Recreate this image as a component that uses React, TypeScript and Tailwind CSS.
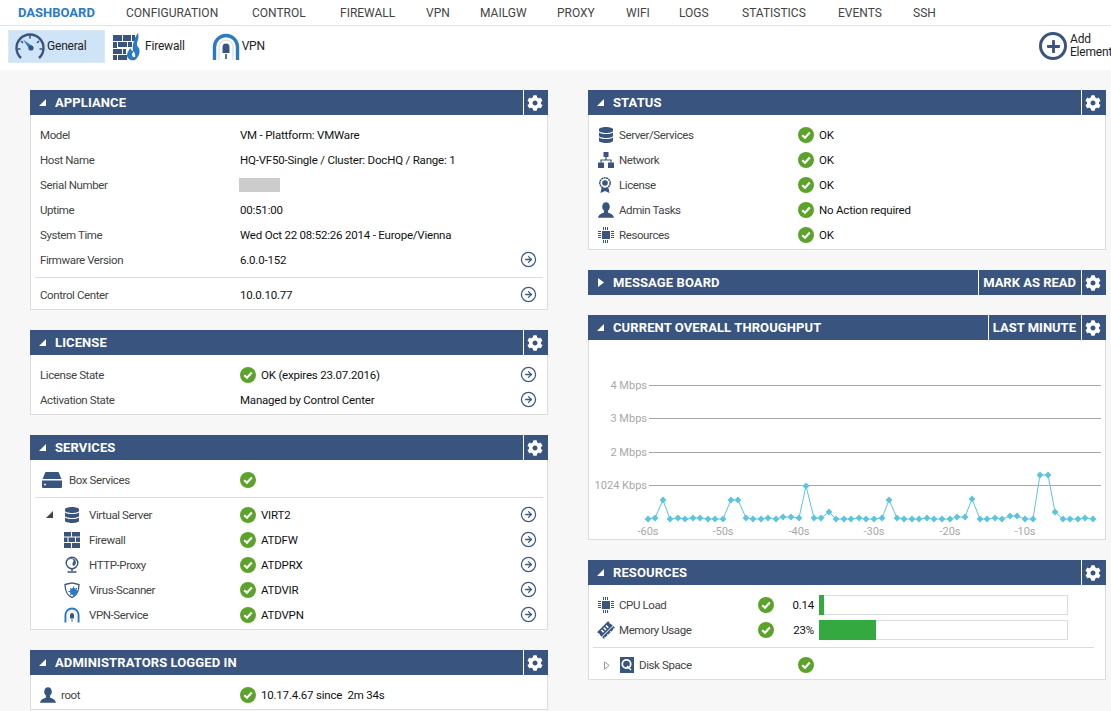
import React from "react";
import { FaCog, FaDatabase, FaMemory, FaPlus } from "react-icons/fa";
import { CircleArrowRight } from "lucide-react";

const NAVY = "#38547f";

const Check = () => (
  <svg width="16" height="16" viewBox="0 0 16 16" className="shrink-0">
    <circle cx="8" cy="8" r="8" fill="#5ba32b" />
    <path d="M4.2 8.2 7 10.8 11.8 5.6" fill="none" stroke="#fff" strokeWidth="2.2" />
  </svg>
);

const Arrow = () => <CircleArrowRight size={17} strokeWidth={1.8} color="#3f5a82" className="shrink-0" />;

const Gauge = () => (
  <svg width="30" height="28" viewBox="0 0 30 28">
    <path d="M6 26A13.5 13.5 0 1 1 24 26" fill="none" stroke="#38547f" strokeWidth="2.4" />
    <path d="M6 9l2 2M15 3.5v3M24 9l-2 2M2.5 17h3M27.5 17h-3" stroke="#38547f" strokeWidth="1.6" />
    <path d="M8 7.5 18 14.5 15 18Z" fill="#2a7ac6" />
    <circle cx="16" cy="16" r="2.6" fill="#38547f" />
  </svg>
);

const Bricks = ({ w = 16, h = 16 }: { w?: number; h?: number }) => (
  <svg width={w} height={h} viewBox="0 0 16 16">
    <path d="M0 0h7v4.5H0zM8 0h8v4.5H8zM0 5.5h3.5V10H0zM4.5 5.5H11V10H4.5zM12 5.5h4V10h-4zM0 11h7v5H0zM8 11h8v5H8z" fill={NAVY} />
  </svg>
);

const FireWall = () => (
  <svg width="30" height="28" viewBox="0 0 30 28">
    <path d="M0 2h9v6H0zM10 2h8v6h-8zM19 2h3v6h-3zM0 9h4v6H0zM5 9h9v5H5zM15 9h4v5h-4zM0 16h9v5H0zM10 16h3v5h-3zM0 22h4v5H0zM5 22h9v5H5z" fill={NAVY} />
    <path d="M25 0c1.5 6-1 8-1 11 0 2 1 3 2 4 1 3 1 8-4 12-4 1-8-1-8-5 0-3 2-4 3-7 1 2 2 3 3 3-1-5 1-13 5-18Z" fill="#2a7ac6" />
    <path d="M20 24c-2-2-1-4 1-6 0 2 2 3 1 6Z" fill="#fff" />
  </svg>
);

const Tunnel = ({ s = 28 }: { s?: number }) => (
  <svg width={s} height={s} viewBox="0 0 28 28">
    <path d="M2.5 27V14a11.5 11.5 0 0 1 23 0v13" fill="none" stroke="#2a7ac6" strokeWidth="3.4" />
    <path d="M7 27V14a7 7 0 0 1 14 0v13" fill="none" stroke="#cfd8e3" strokeWidth="1" />
    <path d="M10.5 20v-6a3.5 3.5 0 0 1 7 0v6Z" fill={NAVY} />
    <path d="M14 21v5" stroke={NAVY} strokeWidth="1.6" />
  </svg>
);

const Globe = () => (
  <svg width="16" height="17" viewBox="0 0 16 17">
    <circle cx="8" cy="7" r="5.8" fill="none" stroke={NAVY} strokeWidth="1.4" />
    <path d="M4.5 4c2-1.5 4-1.5 5 0 .5 2-1 2-1 4s1.5 2.5 2.5 1c1-1 1-3 .5-4.5C10 2 6 1.5 4.5 4Z" fill={NAVY} />
    <path d="M8 13v2M3.5 16h9" stroke={NAVY} strokeWidth="1.5" />
  </svg>
);

const Shield = () => (
  <svg width="16" height="16" viewBox="0 0 16 16">
    <path d="M1 2.5 8 .8l7 1.7C15 9 12 14 8 15.5 4 14 1 9 1 2.5Z" fill="none" stroke={NAVY} strokeWidth="1.3" />
    <circle cx="9.5" cy="9.5" r="3.6" fill="#2a7ac6" />
    <path d="M9.5 4.5v10M4.5 9.5h10M6 6l7 7M13 6l-7 7" stroke="#2a7ac6" strokeWidth="1" />
  </svg>
);

const Award = () => (
  <svg width="14" height="16" viewBox="0 0 14 16">
    <circle cx="7" cy="6" r="5.2" fill="none" stroke={NAVY} strokeWidth="1.5" strokeDasharray="2 .5" />
    <circle cx="7" cy="6" r="2.8" fill={NAVY} />
    <path d="M3.5 11 2.5 16 7 14l4.5 2-1-5" fill={NAVY} />
  </svg>
);

const Network = () => (
  <svg width="16" height="16" viewBox="0 0 16 16">
    <path d="M5.5 0h5v5h-5zM0 10.5h6V16H0zM10 10.5h6V16h-6z" fill={NAVY} />
    <path d="M8 5v3M3 10.5V8h10v2.5" fill="none" stroke={NAVY} strokeWidth="1.2" />
  </svg>
);

const Person = () => (
  <svg width="16" height="16" viewBox="0 0 16 16">
    <ellipse cx="8" cy="4.8" rx="3.8" ry="4.6" fill={NAVY} />
    <path d="M5.8 8.8 6 10.6C3.5 11.6.8 12.5 0 15.8h16c-.8-3.3-3.5-4.2-6-5.2l.2-1.8Z" fill={NAVY} />
  </svg>
);

const Chip = () => (
  <svg width="16" height="16" viewBox="0 0 16 16" shapeRendering="crispEdges">
    <rect x="4" y="4" width="8" height="8" fill={NAVY} />
    <path d="M0 4.500h3M0 6.500h3M0 8.500h3M0 10.500h3M13 4.500h3M13 6.500h3M13 8.500h3M13 10.500h3M5.500 0v3M7.500 0v3M9.500 0v3M5.500 13v3M7.500 13v3M9.500 13v3" stroke={NAVY} strokeWidth="1" />
  </svg>
);

const Box = () => (
  <svg width="20" height="16" viewBox="0 0 20 16">
    <path d="M3.5 0h13L19.500 7H.5Z" fill={NAVY} />
    <path d="M0 8.500h20V15a1 1 0 0 1-1 1H1a1 1 0 0 1-1-1Z" fill={NAVY} />
    <circle cx="3" cy="12.500" r=".9" fill="#fff" />
  </svg>
);

const Disk = () => (
  <svg width="14" height="16" viewBox="0 0 14 16">
    <rect width="14" height="16" fill={NAVY} />
    <circle cx="6.500" cy="7" r="4.200" fill="none" stroke="#fff" strokeWidth="1.800" />
    <path d="M7 9l4 4" stroke="#fff" strokeWidth="1.400" />
  </svg>
);

const Down = ({ color = "#fff" }: { color?: string }) => (
  <svg width="7" height="7" viewBox="0 0 7 7"><path d="M7 0v7H0Z" fill={color} /></svg>
);

function Panel({
  title,
  action,
  collapsed,
  children,
}: {
  title: string;
  action?: string;
  collapsed?: boolean;
  children?: React.ReactNode;
}) {
  return (
    <section className="w-[518px]">
      <header className="flex h-[25px] items-center bg-[#38547f] text-white">
        <span className="flex w-[25px] shrink-0 items-center justify-center">
          {collapsed ? (
            <svg width="6" height="9" viewBox="0 0 6 9"><path d="M0 0l6 4.500L0 9Z" fill="#fff" /></svg>
          ) : (
            <Down />
          )}
        </span>
        <h2 className="flex-1 text-[13px] font-bold tracking-[0.1px]">{title}</h2>
        {action && (
          <span className="flex h-full items-center border-l border-white pl-[4px] pr-[5px] text-[13px] font-bold">{action}</span>
        )}
        <span className="flex h-full w-[25px] items-center justify-center border-l border-white pr-[2px]">
          <FaCog size={16} color="#fff" />
        </span>
      </header>
      {children && (
        <div className="border-x border-b border-[#dcdcdc] bg-white">{children}</div>
      )}
    </section>
  );
}

function Row({
  label,
  icon,
  slot = "w-[21px]",
  indent,
  check,
  value,
  arrow,
}: {
  label: string;
  icon?: React.ReactNode;
  slot?: string;
  indent?: React.ReactNode;
  check?: boolean;
  value?: string;
  arrow?: boolean;
}) {
  return (
    <div className="flex h-[25px] items-center pr-[10px] text-[11.5px] text-[#444]">
      <div className="flex w-[209px] shrink-0 items-center pl-[9px]">
        {indent}
        {icon && <span className={`flex shrink-0 items-center justify-start ${slot}`}>{icon}</span>}
        <span className="pt-[2px] tracking-[-0.4px]">{label}</span>
      </div>
      {check && (
        <span className="mr-[5px]">
          <Check />
        </span>
      )}
      <span className="flex-1 whitespace-pre pt-[2px] tracking-[-0.2px] text-[#111]">{value}</span>
      {arrow && <Arrow />}
    </div>
  );
}

const Divider = ({ className = "mx-[4px]" }: { className?: string }) => <div className={`h-px bg-[#dcdcdc] ${className}`} />;

const nav = [
  ["CONFIGURATION", "w-[126px]"],
  ["CONTROL", "w-[88px]"],
  ["FIREWALL", "w-[86px]"],
  ["VPN", "w-[54px]"],
  ["MAILGW", "w-[77px]"],
  ["PROXY", "w-[69px]"],
  ["WIFI", "w-[53px]"],
  ["LOGS", "w-[63px]"],
  ["STATISTICS", "w-[96px]"],
  ["EVENTS", "w-[75px]"],
  ["SSH", "w-[40px]"],
];

const pts: [number, number][] = [
  [648, 519], [655, 518], [663, 500], [670, 519], [678, 518], [685, 519], [693, 518], [700, 518], [708, 519], [715, 519], [723, 519],
  [731, 500], [738, 500], [746, 518], [753, 519], [761, 519], [768, 518], [776, 519], [783, 517], [791, 517], [799, 518], [806, 486],
  [814, 518], [821, 518], [829, 512], [836, 519], [844, 519], [851, 519], [859, 518], [866, 519], [874, 519], [882, 518], [889, 500],
  [897, 518], [904, 519], [912, 519], [919, 519], [927, 518], [934, 519], [942, 519], [950, 519], [957, 517], [965, 517], [972, 499],
  [980, 519], [987, 519], [995, 518], [1002, 519], [1010, 516], [1017, 516], [1025, 519], [1033, 519], [1040, 475], [1048, 475], [1055, 512],
  [1063, 519], [1070, 519], [1078, 519], [1085, 518], [1093, 519],
];

const Chart = () => (
  <svg viewBox="589 340 516 199" className="block h-[199px] w-[516px]" fontFamily="Roboto, sans-serif" fontSize="11" fill="#a8a8a8">
    {[
      [385, "4 Mbps"],
      [418, "3 Mbps"],
      [452, "2 Mbps"],
      [485, "1024 Kbps"],
    ].map(([y, t]) => (
      <g key={t as string}>
        <line x1="649" x2="1101" y1={(y as number) + 0.5} y2={(y as number) + 0.5} stroke="#a6a6a6" />
        <text x="647" y={(y as number) + 4} textAnchor="end">{t}</text>
      </g>
    ))}
    {[["-60s", 648], ["-50s", 723], ["-40s", 799], ["-30s", 874], ["-20s", 950], ["-10s", 1025]].map(([t, x]) => (
      <text key={t as string} x={x as number} y="535" textAnchor="middle">{t}</text>
    ))}
    <polyline points={pts.map((p) => p.join(",")).join(" ")} fill="none" stroke="#5bc4e0" strokeWidth="1" />
    {pts.map(([x, y]) => (
      <path key={x} d={`M${x} ${y - 3.4}L${x + 3.4} ${y}L${x} ${y + 3.4}L${x - 3.4} ${y}Z`} fill="#5bc4e0" />
    ))}
  </svg>
);

function ResRow({ icon, label, value, pct }: { icon: React.ReactNode; label: string; value: string; pct: number }) {
  return (
    <div className="flex h-[25px] items-center text-[11.5px]">
      <span className="flex w-[30px] shrink-0 justify-center pl-[3px]">{icon}</span>
      <span className="w-[139px] shrink-0 pt-[2px] tracking-[-0.4px] text-[#444]">{label}</span>
      <Check />
      <span className="w-[45px] shrink-0 pr-[5px] pt-[2px] text-right tracking-[-0.2px] text-[#111]">{value}</span>
      <div className="h-[20px] w-[249px] border-y border-r border-[#dcdcdc]">
        <div className="-my-px h-[20px] bg-[#34a93f]" style={{ width: `${pct}px` }} />
      </div>
    </div>
  );
}

const pad = <span className="w-[24px] shrink-0" />;

export default function App() {
  return (
    <div className="h-[711px] w-[1111px] overflow-hidden bg-[#f7f7f7] font-['Roboto',sans-serif]">
      <nav className="flex h-[26px] items-center border-b border-[#e3e3e3] bg-white pl-[18px] text-[12px] text-[#444]">
        <span className="w-[108px] shrink-0 text-[13px] font-bold text-[#2a7ac6]">DASHBOARD</span>
        {nav.map(([n, w]) => (
          <span key={n} className={`shrink-0 ${w}`}>{n}</span>
        ))}
      </nav>
      <div className="flex h-[44px] items-start bg-white pl-[8px] pt-[4px] text-[12px] tracking-[-0.2px] text-[#222]">
        <div className="flex h-[33px] w-[97px] items-center gap-[2px] border border-[#dbe9f5] bg-[#cfe4f7] pb-[1px] pl-[6px]">
          <Gauge />
          <span>General</span>
        </div>
        <div className="ml-[8px] flex h-[33px] items-center gap-[2px]">
          <FireWall />
          <span className="pb-[2px]">Firewall</span>
        </div>
        <div className="ml-[27px] flex h-[33px] items-center gap-[2px]">
          <Tunnel />
          <span className="pb-[2px]">VPN</span>
        </div>
        <div className="ml-auto flex h-[33px] items-center gap-[3px] pb-[1px] leading-[13px]">
          <span className="flex h-[28px] w-[28px] items-center justify-center rounded-full border-[3px] border-[#38547f]">
            <FaPlus size={15} color="#38547f" />
          </span>
          <span className="w-[41px] overflow-hidden">Add<br />Element</span>
        </div>
      </div>

      <main className="flex gap-[40px] pl-[30px] pt-[20px]">
        <div className="flex flex-col gap-[20px]">
          <Panel title="APPLIANCE">
            <div className="pt-[7px]">
              <Row label="Model" value="VM - Plattform: VMWare" />
              <Row label="Host Name" value="HQ-VF50-Single / Cluster: DocHQ / Range: 1" />
              <div className="flex h-[25px] items-center text-[11.5px] tracking-[-0.4px] text-[#444]">
                <span className="w-[208px] pl-[9px] pt-[2px]">Serial Number</span>
                <span className="h-[14px] w-[41px] bg-[#cccccc]" />
              </div>
              <Row label="Uptime" value="00:51:00" />
              <Row label="System Time" value="Wed Oct 22 08:52:26 2014 - Europe/Vienna" />
              <Row label="Firmware Version" value="6.0.0-152" arrow />
            </div>
            <Divider className="mx-[4px] mt-[5px]" />
            <div className="pb-[2px] pt-[4px]">
              <Row label="Control Center" value="10.0.10.77" arrow />
            </div>
          </Panel>
          <Panel title="LICENSE">
            <div className="pb-[2px] pt-[7px]">
              <Row label="License State" check value="OK (expires 23.07.2016)" arrow />
              <Row label="Activation State" value="Managed by Control Center" arrow />
            </div>
          </Panel>
          <Panel title="SERVICES">
            <div className="pb-[2px] pt-[7px]">
              <Row label="Box Services" slot="w-[29px] pl-[2px]" icon={<Box />} check />
            </div>
            <Divider className="mx-[4px] mt-[3px]" />
            <div className="pb-[2px] pt-[4px]">
              <Row label="Virtual Server" slot="w-[25px]" indent={<span className="flex w-[24px] shrink-0 justify-start pl-[6px]"><Down color="#444" /></span>} icon={<FaDatabase size={16} color={NAVY} />} check value="VIRT2" arrow />
              <Row label="Firewall" slot="w-[25px]" indent={pad} icon={<Bricks />} check value="ATDFW" arrow />
              <Row label="HTTP-Proxy" slot="w-[25px]" indent={pad} icon={<Globe />} check value="ATDPRX" arrow />
              <Row label="Virus-Scanner" slot="w-[25px]" indent={pad} icon={<Shield />} check value="ATDVIR" arrow />
              <Row label="VPN-Service" slot="w-[25px]" indent={pad} icon={<Tunnel s={16} />} check value="ATDVPN" arrow />
            </div>
          </Panel>
          <Panel title="ADMINISTRATORS LOGGED IN">
            <div className="pb-[2px] pt-[7px]">
              <Row label="root" icon={<Person />} check value="10.17.4.67 since  2m 34s" />
            </div>
          </Panel>
        </div>

        <div className="flex flex-col gap-[20px]">
          <Panel title="STATUS">
            <div className="pb-[2px] pt-[7px]">
              <Row label="Server/Services" icon={<FaDatabase size={16} color={NAVY} />} check value="OK" />
              <Row label="Network" icon={<Network />} check value="OK" />
              <Row label="License" icon={<Award />} check value="OK" />
              <Row label="Admin Tasks" icon={<Person />} check value="No Action required" />
              <Row label="Resources" icon={<Chip />} check value="OK" />
            </div>
          </Panel>
          <Panel title="MESSAGE BOARD" action="MARK AS READ" collapsed />
          <Panel title="CURRENT OVERALL THROUGHPUT" action="LAST MINUTE">
            <Chart />
          </Panel>
          <Panel title="RESOURCES">
            <div className="pt-[7px]">
              <ResRow icon={<Chip />} label="CPU Load" value="0.14" pct={5} />
              <ResRow icon={<FaMemory size={16} color={NAVY} className="-rotate-45" />} label="Memory Usage" value="23%" pct={57} />
            </div>
            <Divider className="mx-[4px] mr-[11px] mt-[5px]" />
            <div className="flex h-[31px] items-center pt-[3px] text-[11.5px] tracking-[-0.4px] text-[#444]">
              <span className="ml-[15px] flex w-[16px]">
                <svg width="6" height="9" viewBox="0 0 6 9"><path d="M.5 .8 5.200 4.500.5 8.200Z" fill="none" stroke="#999" /></svg>
              </span>
              <Disk />
              <span className="ml-[5px] w-[159px] pt-[1px]">Disk Space</span>
              <Check />
            </div>
          </Panel>
        </div>
      </main>
    </div>
  );
}
